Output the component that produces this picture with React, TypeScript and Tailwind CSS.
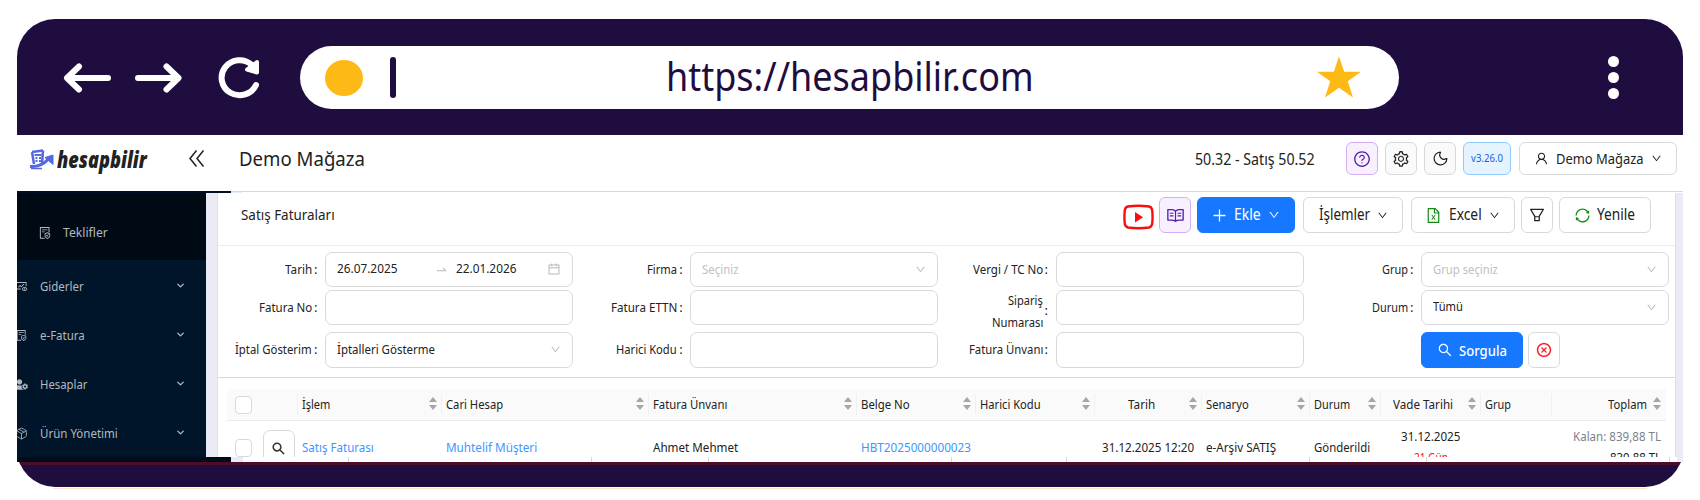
import { useLayoutEffect, useRef, useState, type ReactNode } from "react";
import clsx from "clsx";
import {
  AiOutlineCalendar,
  AiOutlineCloseCircle,
  AiOutlineDown,
  AiOutlineFileExcel,
  AiOutlineFileProtect,
  AiOutlineFilter,
  AiOutlineFundView,
  AiOutlinePlus,
  AiOutlineQuestionCircle,
  AiOutlineRead,
  AiOutlineSearch,
  AiOutlineSetting,
  AiOutlineSwapRight,
  AiOutlineSync,
  AiOutlineUser,
} from "react-icons/ai";
import { ChevronDown, Moon, Package } from "lucide-react";
import { FaUserCog } from "react-icons/fa";

function Fit({ w, children, className }: { w: number; children: string; className?: string }) {
  const ref = useRef<HTMLSpanElement>(null);
  const [scale, setScale] = useState(1);

  useLayoutEffect(() => {
    if (ref.current) setScale(w / ref.current.offsetWidth);
  }, [w, children]);

  return (
    <span className={clsx("inline-block shrink-0 text-left whitespace-nowrap", className)} style={{ width: w }}>
      <span ref={ref} className="inline-block origin-left" style={{ transform: `scaleX(${scale})` }}>
        {children}
      </span>
    </span>
  );
}

function BrowserBar() {
  return (
    <div className="flex h-[116px] items-center rounded-t-[38px] bg-[#1f0d40] pt-[1px]">
      <svg className="ml-[46px] h-[42px] w-[200px] shrink-0" viewBox="0 0 200 42" fill="none" stroke="#fff" strokeWidth="6" strokeLinecap="round">
        <path d="M45 21H5M16 9.500L4 21l12 11.500" strokeLinejoin="round" />
        <path d="M75 21h40M103.500 9.500L115.500 21l-12 11.500" strokeLinejoin="round" />
        <path d="M193 28A18 17.500 0 1 1 189 8" />
        <path d="M194 5v10.500l-10-3z" fill="#fff" strokeWidth="4" strokeLinejoin="round" />
      </svg>
      <div className="ml-[37px] flex h-[63px] w-[1099px] items-center rounded-full bg-white">
        <span className="ml-[25px] h-[36px] w-[38px] rounded-[50%] bg-[#fdb916]" />
        <span className="ml-[27px] h-[41px] w-[6px] rounded-full bg-[#1f0d40]" />
        <Fit w={368} className="-mt-[4px] ml-[270px] text-[40px] leading-[56px] text-[#1f0d40]">
          https://hesapbilir.com
        </Fit>
        <svg className="-mt-[2px] ml-[282px] h-[42px] w-[46px]" viewBox="0 0 46 42">
          <path d="M23 .5l5.200 15.200h16.800L31.800 25.200 37 41.500 23 31.800 9 41.500l5.200-16.300L1 15.700h16.800z" fill="#fdb916" />
        </svg>
      </div>
      <div className="ml-[209px] flex flex-col gap-[5px]">
        <span className="size-[11px] rounded-full bg-white" />
        <span className="size-[11px] rounded-full bg-white" />
        <span className="size-[11px] rounded-full bg-white" />
      </div>
    </div>
  );
}

function Logo() {
  return (
    <div className="ml-3 flex h-[30px] items-center">
      <svg className="h-[21px] w-[25px]" viewBox="0 0 25 21" fill="none" stroke="#5468e0">
        <path d="M3 3l11-1.500M3 3l2 12M14 1.500L13 15" strokeWidth="2.500" strokeLinejoin="round" />
        <path d="M5.500 6h7M6.500 9h2M10 9h2M6.500 12h2M10 12h2" strokeWidth="1.800" />
        <path d="M1 17.500c7 .5 13-1.500 18-7" strokeWidth="3" />
        <path d="M16 8.500L24 6v9.500z" fill="#5468e0" />
        <path d="M2 19.500h11" strokeWidth="1.500" />
      </svg>
      <Fit w={90} className="ml-[3px] text-[22px] leading-[30px] font-black text-[#222] italic">
        hesapbilir
      </Fit>
    </div>
  );
}

function Button({ className, children }: { className?: string; children: ReactNode }) {
  return (
    <button
      type="button"
      className={clsx("flex shrink-0 items-center justify-center rounded-[6px] border", className)}
    >
      {children}
    </button>
  );
}

const PLAIN = "border-[#d9d9d9] bg-white";
const PURPLE = "border-[#d3adf7] bg-[#f9f0ff] text-[#531dab]";

function AppHeader() {
  return (
    <header className="flex h-[56px] bg-white">
      <div className="flex h-[48px] items-center">
        <Logo />
        <svg className="-mt-[1px] ml-[42px] h-[17px] w-[16px]" viewBox="0 0 16 17" fill="none" stroke="#222" strokeWidth="1.500">
          <path d="M7.500 .5L1 8.500l6.500 8M14.500 .5L8 8.500l6.500 8" />
        </svg>
        <Fit w={126} className="ml-[34px] text-[19.500px] text-[#222]">
          Demo Mağaza
        </Fit>
      </div>
      <div className="ml-auto flex h-[47px] items-center pr-[6px] text-[#222]">
        <Fit w={120} className="mt-[2px] text-[15.500px]">
          50.32 - Satış 50.52
        </Fit>
        <Button className={clsx("ml-[31px] h-[33px] w-[32px]", PURPLE)}>
          <AiOutlineQuestionCircle className="size-[18px]" />
        </Button>
        <Button className="ml-[7px] h-[33px] w-[32px] border-[#d9d9d9] bg-[#fafafa]">
          <AiOutlineSetting className="size-[18px]" />
        </Button>
        <Button className="ml-[7px] h-[33px] w-[32px] border-[#d9d9d9] bg-[#fafafa]">
          <Moon className="size-[17px]" strokeWidth={1.7} />
        </Button>
        <Button className="ml-[7px] h-[33px] w-[48px] border-[#91caff] bg-[#e4f3fe] text-[#1463df]">
          <Fit w={32} className="text-[10.500px]">
            v3.26.0
          </Fit>
        </Button>
        <Button className={clsx("ml-[8px] h-[33px] w-[158px]", PLAIN)}>
          <AiOutlineUser className="size-[15px]" />
          <Fit w={88} className="ml-[7px] text-[15px]">
            Demo Mağaza
          </Fit>
          <AiOutlineDown className="ml-[7px] size-[11px]" />
        </Button>
      </div>
    </header>
  );
}

const MENU = [
  { label: "Giderler", w: 44, Icon: AiOutlineFundView },
  { label: "e-Fatura", w: 45, Icon: AiOutlineFileProtect },
  { label: "Hesaplar", w: 48, Icon: FaUserCog },
  { label: "Ürün Yönetimi", w: 78, Icon: Package },
];

function Sidebar() {
  return (
    <nav className="w-[189px] shrink-0 overflow-hidden bg-[#001529] text-[13px] text-[#b2b9bf]">
      <div className="flex h-[67px] items-center bg-[#000a14] pt-[13px] pl-[21px]">
        <AiOutlineFileProtect className="size-[14px]" />
        <Fit w={45} className="ml-[11px]">
          Teklifler
        </Fit>
      </div>
      <div className="pt-[2px]">
        {MENU.map(({ label, w, Icon }) => (
          <div key={label} className="flex h-[49px] items-center">
            <Icon className="-ml-[2px] size-[13px] shrink-0" strokeWidth={Icon === Package ? 1.5 : undefined} />
            <Fit w={w} className="ml-[11.500px]">
              {label}
            </Fit>
            <ChevronDown className="-mt-[3px] mr-[20px] ml-auto size-[11px]" strokeWidth={3} />
          </div>
        ))}
      </div>
    </nav>
  );
}

function Toolbar() {
  return (
    <div className="flex h-[53px] items-start border-b border-[#ececec] pt-[4px] pl-[23px] text-[15.500px] text-[#222]">
      <Fit w={94} className="mt-[6px] text-[15px]">
        Satış Faturaları
      </Fit>
      <div className="ml-auto flex items-center pr-[24px]">
        <svg className="mt-[3px] h-[26px] w-[31px]" viewBox="0 0 31 26" fill="none" stroke="#fb0d0d">
          <path
            d="M5 2.500Q15.500 1 26 2.500Q29 3 29.300 7Q29.800 13 29.300 19Q29 23 26 23.500Q15.500 25 5 23.500Q2 23 1.700 19Q1.200 13 1.700 7Q2 3 5 2.500Z"
            strokeWidth="2.400"
          />
          <path d="M12 8v10.500l8-5.250z" fill="#fb0d0d" stroke="none" />
        </svg>
        <Button className={clsx("ml-[5px] h-[36px] w-[32px]", PURPLE)}>
          <AiOutlineRead className="size-[19px]" />
        </Button>
        <Button className="ml-[6px] h-[36px] w-[98px] border-[#1677ff] bg-[#1677ff] pr-[2px] text-white">
          <AiOutlinePlus className="size-[17px]" />
          <Fit w={27} className="ml-[6px]">
            Ekle
          </Fit>
          <AiOutlineDown className="ml-[7px] size-[12px]" />
        </Button>
        <Button className={clsx("ml-[8px] h-[36px] w-[100px]", PLAIN)}>
          <Fit w={51}>İşlemler</Fit>
          <AiOutlineDown className="ml-[7px] size-[11px]" />
        </Button>
        <Button className={clsx("ml-[8px] h-[36px] w-[104px] pr-[2px]", PLAIN)}>
          <AiOutlineFileExcel className="size-[17px] text-[#118a11]" />
          <Fit w={33} className="ml-[7px]">
            Excel
          </Fit>
          <AiOutlineDown className="ml-[7px] size-[11px]" />
        </Button>
        <Button className={clsx("ml-[6px] h-[36px] w-[32px]", PLAIN)}>
          <AiOutlineFilter className="size-[18px]" />
        </Button>
        <Button className={clsx("ml-[6px] h-[36px] w-[92px] pr-[2px]", PLAIN)}>
          <AiOutlineSync className="size-[17px] text-[#118a11]" />
          <Fit w={38} className="ml-[6px]">
            Yenile
          </Fit>
        </Button>
      </div>
    </div>
  );
}

type FieldProps = {
  label: string;
  labelW: number;
  value?: string;
  valueW?: number;
  placeholder?: boolean;
  select?: boolean;
  children?: ReactNode;
};

function Field({ label, labelW, value, valueW, placeholder, select, children }: FieldProps) {
  return (
    <div className="flex h-full w-[248px] shrink-0">
      <div className="relative w-0">
        <div className="absolute right-[8px] -mt-[1px] flex h-full items-center">
          <Fit w={labelW} className="leading-[22px]">
            {label}
          </Fit>
          <span className="ml-[2px] w-[3px] leading-[22px]">:</span>
        </div>
      </div>
      <div className="flex h-full w-[248px] items-center rounded-[7px] border border-[#d9d9d9] bg-white px-[11px] pb-[1px]">
        {value && (
          <Fit w={valueW ?? 60} className={placeholder ? "mt-[2px] text-[#bfbfbf]" : undefined}>
            {value}
          </Fit>
        )}
        {children}
        {select && <AiOutlineDown className="ml-auto size-[11px] text-[#b8b8b8]" />}
      </div>
    </div>
  );
}

function Filters() {
  return (
    <div className="flex h-[132px] flex-col border-b border-[#d9d9d9] pt-[6px] pl-[107px] text-[13px] text-[#222]">
      <div className="flex h-[35px] gap-[117.300px]">
        <Field label="Tarih" labelW={27} value="26.07.2025" valueW={60}>
          <AiOutlineSwapRight className="ml-[38px] size-[13px] text-[#b8b8b8]" />
          <Fit w={60} className="ml-[8px]">
            22.01.2026
          </Fit>
          <AiOutlineCalendar className="ml-auto size-[14px] text-[#b8b8b8]" />
        </Field>
        <Field label="Firma" labelW={30} value="Seçiniz" valueW={37} placeholder select />
        <Field label="Vergi / TC No" labelW={70} />
        <Field label="Grup" labelW={26} value="Grup seçiniz" valueW={65} placeholder select />
      </div>
      <div className="mt-[3px] flex h-[35px] gap-[117.300px]">
        <Field label="Fatura No" labelW={53} />
        <Field label="Fatura ETTN" labelW={66} />
        <div className="h-[35px] w-[248px] shrink-0">
          <div className="relative w-0">
            <div className="absolute right-[8px] -mt-[1px] flex h-[44px] items-center">
              <div className="flex flex-col items-end">
                <Fit w={35} className="leading-[22px]">
                  Sipariş
                </Fit>
                <Fit w={51} className="leading-[22px]">
                  Numarası
                </Fit>
              </div>
              <span className="ml-[2px] w-[3px]">:</span>
            </div>
          </div>
          <div className="h-[35px] rounded-[7px] border border-[#d9d9d9]" />
        </div>
        <Field label="Durum" labelW={36} value="Tümü" valueW={30} select />
      </div>
      <div className="mt-[7px] flex h-[36px] gap-[117.300px]">
        <Field label="İptal Gösterim" labelW={77} value="İptalleri Gösterme" valueW={98} select />
        <Field label="Harici Kodu" labelW={61} />
        <Field label="Fatura Ünvanı" labelW={74} />
        <div className="flex gap-[5px]">
          <Button className="h-[36px] w-[102px] border-[#1677ff] bg-[#1677ff] text-[15px] font-medium text-white">
            <AiOutlineSearch className="size-[16px]" />
            <Fit w={48} className="ml-[6px]">
              Sorgula
            </Fit>
          </Button>
          <Button className={clsx("h-[36px] w-[32px]", PLAIN)}>
            <AiOutlineCloseCircle className="size-[16px] text-[#f5121d]" strokeWidth={15} />
          </Button>
        </div>
      </div>
    </div>
  );
}

function Sorter() {
  return (
    <svg className="-mt-[2px] mr-[4px] h-[13px] w-[8px] shrink-0" viewBox="0 0 8 13" fill="#a6a6a6">
      <path d="M4 0L8 5H0zM4 13L0 8h8z" />
    </svg>
  );
}

type Column = {
  title: string;
  titleW: number;
  className: string;
  titleClass?: string;
  sort?: boolean;
  cell?: ReactNode;
};

const COLUMNS: Column[] = [
  {
    title: "İşlem",
    titleW: 28,
    className: "w-[144px]",
    sort: true,
    cell: <Fit w={72} className="text-[#4096ff]">Satış Faturası</Fit>,
  },
  {
    title: "Cari Hesap",
    titleW: 57,
    className: "w-[207px]",
    sort: true,
    cell: <Fit w={91} className="text-[#4096ff]">Muhtelif Müşteri</Fit>,
  },
  { title: "Fatura Ünvanı", titleW: 74, className: "w-[208px]", sort: true, cell: <Fit w={85}>Ahmet Mehmet</Fit> },
  {
    title: "Belge No",
    titleW: 49,
    className: "w-[119px]",
    sort: true,
    cell: <Fit w={110} className="text-[#4096ff]">HBT2025000000023</Fit>,
  },
  { title: "Harici Kodu", titleW: 61, className: "w-[119px]", sort: true },
  {
    title: "Tarih",
    titleW: 27,
    className: "w-[107px]",
    titleClass: "ml-[29px]",
    sort: true,
    cell: <Fit w={92} className="ml-[3px]">31.12.2025 12:20</Fit>,
  },
  { title: "Senaryo", titleW: 43, className: "w-[108px]", sort: true, cell: <Fit w={70}>e-Arşiv SATIŞ</Fit> },
  { title: "Durum", titleW: 36, className: "w-[71px]", sort: true, cell: <Fit w={56}>Gönderildi</Fit> },
  {
    title: "Vade Tarihi",
    titleW: 60,
    className: "w-[100px]",
    titleClass: "ml-[8px]",
    sort: true,
    cell: (
      <div className="mt-[4px] flex w-[91px] flex-col items-center">
        <Fit w={59} className="leading-[22px]">31.12.2025</Fit>
        <Fit w={34} className="leading-[20px] text-[#f5121d]">21 Gün</Fit>
      </div>
    ),
  },
  { title: "Grup", titleW: 26, className: "w-[71px]" },
];

function Table() {
  return (
    <div className="mx-[9px] mt-[11px] text-[13px] text-[#222]">
      <div className="flex h-[32px] items-center rounded-tl-[7px] border-b border-[#ebebef] bg-[#fafafa]">
        <div className="w-[70px] shrink-0 pl-[8px]">
          <div className="h-[18px] w-[17px] rounded-[4px] border border-[#d9d9d9] bg-white" />
        </div>
        {COLUMNS.map((c) => (
          <div
            key={c.title}
            className={clsx(
              "flex h-[21px] shrink-0 items-center justify-between border-l border-[#f0f0f0] pl-[4px]",
              c.className,
            )}
          >
            <Fit w={c.titleW} className={c.titleClass}>
              {c.title}
            </Fit>
            {c.sort && <Sorter />}
          </div>
        ))}
        <div className="flex h-[21px] flex-1 items-center justify-end border-l border-[#f0f0f0] pr-[1px]">
          <Fit w={39} className="mr-[6px]">
            Toplam
          </Fit>
          <Sorter />
        </div>
      </div>
      <div className="flex h-[65px] items-start">
        <div className="flex w-[70px] shrink-0 pl-[8px]">
          <div className="mt-[18px] h-[18px] w-[17px] rounded-[4px] border border-[#d9d9d9] bg-white" />
          <div className="mt-[9px] ml-[11px] flex h-[36px] w-[32px] items-center justify-center rounded-[7px] border border-[#d9d9d9] pr-[2px]">
            <AiOutlineSearch className="size-[15px]" strokeWidth={20} />
          </div>
        </div>
        {COLUMNS.map((c) => (
          <div key={c.title} className={clsx("shrink-0 pl-[5px]", c.title !== "Vade Tarihi" && "pt-[17px]", c.className)}>
            {c.cell}
          </div>
        ))}
        <div className="mt-[4px] flex flex-1 flex-col items-end pr-[5px]">
          <Fit w={88} className="leading-[22px] text-[#7b828c]">
            Kalan: 839,88 TL
          </Fit>
          <Fit w={51} className="leading-[20px]">
            839,88 TL
          </Fit>
        </div>
      </div>
    </div>
  );
}

/** Sliver of the row below, cut by the frame. */
const TICKS = [
  "w-[106px]",
  "w-[243px]",
  "w-[117px]",
  "w-[243px]",
  "w-[115px]",
  "w-[243px]",
  "w-[117px]",
  "w-[243px]",
];

export default function App() {
  return (
    <div className="h-[500px] w-[1700px] overflow-hidden bg-white px-[17px] pt-[19px] font-['Noto_Sans',sans-serif]">
      <BrowserBar />
      <AppHeader />
      <div className="flex h-[2px]">
        <div className="w-[214px] bg-[#001024]" />
        <div className="w-[11px] border-t border-[#d9d9d9] bg-[#ebebf5]" />
        <div className="flex-1 border-t border-[#d9d9d9]" />
      </div>
      <div className="flex h-[264px] overflow-hidden">
        <Sidebar />
        <div className="w-[12px] shrink-0 border-r border-[#e0e0e8] bg-[#ebebf5]" />
        <main className="h-[264px] w-[1457px] shrink-0 overflow-hidden bg-white">
          <Toolbar />
          <Filters />
          <Table />
        </main>
        <div className="flex-1 border-l border-[#dedee6] bg-[#ebebf5]" />
      </div>
      <div className="flex h-[5px]">
        <div className="w-[214px] shrink-0 bg-[#000c17]" />
        <div className="w-[12px] shrink-0 bg-[#ebebf5]" />
        {TICKS.map((t, i) => (
          <div key={i} className={clsx("shrink-0 border-r border-[#d9d9d9]", t)} />
        ))}
        <div className="ml-auto w-[6px] bg-[#ebebf5]" />
      </div>
      {/* bottom edge shows only the lower part of its round corners */}
      <div className="flex h-[25px] items-end overflow-hidden">
        <div className="h-[38px] flex-1 shrink-0 overflow-hidden rounded-b-[38px] bg-[#1f0d40] pt-[13px]">
          <div className="h-[3px] bg-[#4d0c2a]" />
        </div>
      </div>
      <div className="mx-[36px] mt-[1px] h-[1px] bg-[#fbe6c8]" />
    </div>
  );
}
